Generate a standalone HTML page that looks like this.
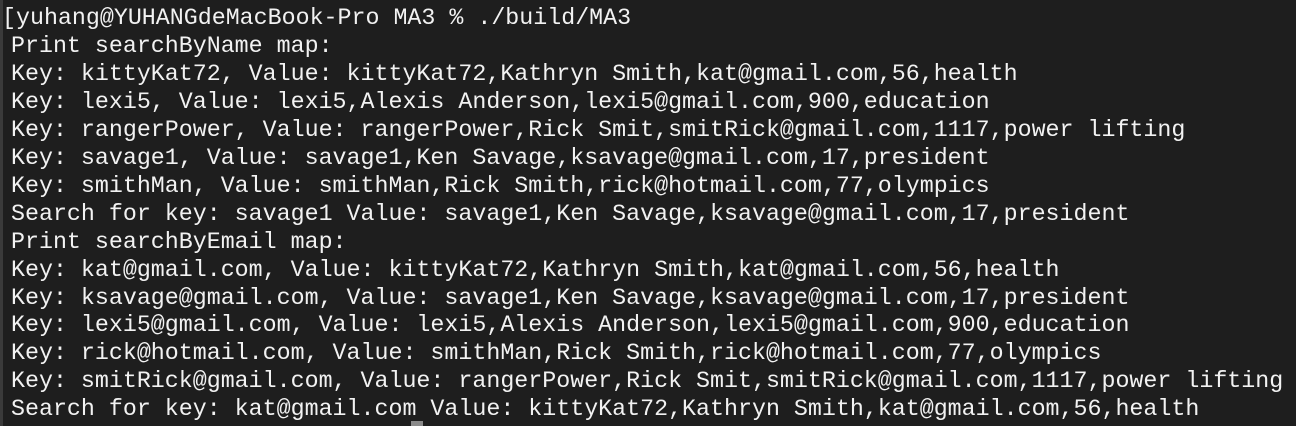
<html><head><style>
body{margin:0;width:1296px;height:426px;background:#1e1e1e;overflow:hidden;position:relative}
.edge{position:absolute;left:0;top:0;width:3px;height:426px;background:#3a3a3a}
pre{margin:0;position:absolute;left:11px;top:5px;font-family:"Liberation Mono",monospace;font-size:23.3px;line-height:27.95px;color:#f2f2f2;white-space:pre}
.cur{position:absolute;left:411px;top:421px;width:12px;height:5px;background:#8a8a8a}
</style></head><body><div class="edge"></div>
<pre><span style="margin-left:-9px">[</span>yuhang@YUHANGdeMacBook-Pro MA3 % ./build/MA3
Print searchByName map:
Key: kittyKat72, Value: kittyKat72,Kathryn Smith,kat@gmail.com,56,health
Key: lexi5, Value: lexi5,Alexis Anderson,lexi5@gmail.com,900,education
Key: rangerPower, Value: rangerPower,Rick Smit,smitRick@gmail.com,1117,power lifting
Key: savage1, Value: savage1,Ken Savage,ksavage@gmail.com,17,president
Key: smithMan, Value: smithMan,Rick Smith,rick@hotmail.com,77,olympics
Search for key: savage1 Value: savage1,Ken Savage,ksavage@gmail.com,17,president
Print searchByEmail map:
Key: kat@gmail.com, Value: kittyKat72,Kathryn Smith,kat@gmail.com,56,health
Key: ksavage@gmail.com, Value: savage1,Ken Savage,ksavage@gmail.com,17,president
Key: lexi5@gmail.com, Value: lexi5,Alexis Anderson,lexi5@gmail.com,900,education
Key: rick@hotmail.com, Value: smithMan,Rick Smith,rick@hotmail.com,77,olympics
Key: smitRick@gmail.com, Value: rangerPower,Rick Smit,smitRick@gmail.com,1117,power lifting
Search for key: kat@gmail.com Value: kittyKat72,Kathryn Smith,kat@gmail.com,56,health</pre>
<div class="cur"></div>
</body></html>
